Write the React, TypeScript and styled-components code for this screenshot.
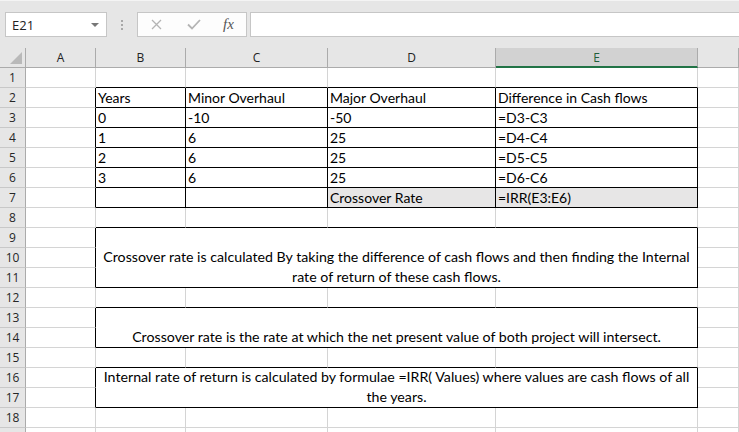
import React from 'react'
import styled, { createGlobalStyle } from 'styled-components'

const GlobalStyle = createGlobalStyle`
  body {
    margin: 0;
    font-family: 'Lato', 'Liberation Sans', sans-serif;
    background: #ffffff;
  }
`

const COLUMNS = ['A', 'B', 'C', 'D', 'E', 'F']
const ROW_COUNT = 19
const GRID_LINE = '#d4d4d4'
const BLACK = '#000000'

const table: Record<number, string[]> = {
  2: ['Years', 'Minor Overhaul', 'Major Overhaul', 'Difference in Cash flows'],
  3: ['0', '-10', '-50', '=D3-C3'],
  4: ['1', '6', '25', '=D4-C4'],
  5: ['2', '6', '25', '=D5-C5'],
  6: ['3', '6', '25', '=D6-C6'],
  7: ['', '', 'Crossover Rate', '=IRR(E3:E6)'],
}

const boxes = [
  {
    top: 9,
    bottom: 11,
    lines: [
      'Crossover rate is calculated By taking the difference of cash flows and then finding the Internal',
      'rate of return of these cash flows.',
    ],
  },
  {
    top: 13,
    bottom: 14,
    lines: ['Crossover rate is the rate at which the net present value of both project will intersect.'],
  },
  {
    top: 16,
    bottom: 17,
    lines: [
      'Internal rate of return is calculated by formulae =IRR( Values) where values are cash flows of all',
      'the years.',
    ],
  },
]

const Page = styled.div`
  width: 739px;
  height: 432px;
  overflow: hidden;
  background: #e6e6e6;
  border-top: 1px solid #f4f4f4;
  box-sizing: border-box;
`

const FormulaBar = styled.div`
  display: flex;
  align-items: center;
  height: 25px;
  margin-top: 11px;
  padding-left: 5px;
  margin-bottom: 11px;
`

const NameBox = styled.div`
  display: flex;
  align-items: center;
  justify-content: space-between;
  width: 102px;
  height: 25px;
  box-sizing: border-box;
  background: #ffffff;
  border: 1px solid #c6c6c6;
  padding: 0 7px 0 6px;
  font-family: 'Open Sans', 'Liberation Sans', sans-serif;
  font-size: 13px;
  color: #222222;
`

const DropArrow = styled.span`
  width: 0;
  height: 0;
  border-left: 4px solid transparent;
  border-right: 4px solid transparent;
  border-top: 4px solid #777777;
`

const Grip = styled.div`
  display: flex;
  flex-direction: column;
  gap: 2px;
  margin: 0 14px 0 14px;
  span {
    width: 2px;
    height: 2px;
    background: #a8a8a8;
  }
`

const FxBox = styled.div`
  display: flex;
  align-items: center;
  width: 110px;
  height: 25px;
  box-sizing: border-box;
  background: #fdfdfd;
  border: 1px solid #c6c6c6;
  padding-left: 13px;
`

const IconSlot = styled.span<{ $gap: number }>`
  display: flex;
  margin-right: ${p => p.$gap}px;
`

const FxLabel = styled.span`
  font-family: 'Liberation Serif', serif;
  font-style: italic;
  font-size: 15px;
  color: #555555;
`

const FormulaInput = styled.div`
  flex: 1;
  height: 25px;
  margin-left: 3px;
  box-sizing: border-box;
  background: #ffffff;
  border: 1px solid #c6c6c6;
  border-right: none;
`

const Sheet = styled.div`
  display: grid;
  grid-template-columns: 26px 70px 90px 142px 168px 202px 1fr;
  grid-auto-rows: 20px;
  background: #ffffff;
`

const Corner = styled.div`
  position: relative;
  background: #e6e6e6;
  border-right: 1px solid #ababab;
  border-bottom: 1px solid #ababab;
  box-sizing: border-box;
  &::after {
    content: '';
    position: absolute;
    right: 3px;
    bottom: 3px;
    width: 0;
    height: 0;
    border-left: 12px solid transparent;
    border-bottom: 12px solid #b9b9b9;
  }
`

const ColHeader = styled.div<{ $active?: boolean }>`
  display: flex;
  align-items: center;
  justify-content: center;
  box-sizing: border-box;
  background: ${p => (p.$active ? '#d2d2d2' : '#e6e6e6')};
  border-right: 1px solid #ababab;
  border-bottom: ${p => (p.$active ? '2px solid #217346' : '1px solid #ababab')};
  padding-top: ${p => (p.$active ? '1px' : '0')};
  font-family: 'Open Sans', 'Liberation Sans', sans-serif;
  font-size: 12px;
  color: ${p => (p.$active ? '#1f5e3a' : '#222222')};
`

const RowHeader = styled.div`
  display: flex;
  align-items: center;
  justify-content: center;
  box-sizing: border-box;
  background: #e6e6e6;
  border-right: 1px solid #ababab;
  border-bottom: 1px solid #c8c8c8;
  font-family: 'Open Sans', 'Liberation Sans', sans-serif;
  font-size: 12px;
  color: #262626;
`

const Cell = styled.div<{ $right: string; $bottom: string; $fill?: string }>`
  box-sizing: border-box;
  border-right: 1px solid ${p => p.$right};
  border-bottom: 1px solid ${p => p.$bottom};
  background: ${p => p.$fill || '#ffffff'};
  padding: 0 2px;
  font-size: 14px;
  line-height: 19px;
  color: #000000;
  white-space: nowrap;
  overflow: hidden;
`

const MergedBox = styled.div<{ $rows: number }>`
  grid-column: span 4;
  grid-row: span ${p => p.$rows};
  display: flex;
  flex-direction: column;
  justify-content: flex-end;
  align-items: center;
  box-sizing: border-box;
  border-right: 1px solid ${BLACK};
  border-bottom: 1px solid ${BLACK};
  font-size: 14.2px;
  line-height: 20px;
  color: #000000;
  white-space: nowrap;
  span {
    display: block;
    height: 20px;
  }
`

const inTable = (r: number, c: number) => r >= 2 && r <= 7 && c >= 1 && c <= 4
const boxFor = (r: number, c: number) =>
  boxes.find(b => r >= b.top && r <= b.bottom && c >= 1 && c <= 4)
const isBlack = (r: number, c: number) => inTable(r, c) || !!boxFor(r, c)

const CrossIcon = () => (
  <svg width="11" height="11" viewBox="0 0 11 11">
    <path d="M1 1 L10 10 M10 1 L1 10" stroke="#b4b4b4" strokeWidth="1.3" fill="none" />
  </svg>
)

const CheckIcon = () => (
  <svg width="14" height="11" viewBox="0 0 14 11">
    <path d="M1 5.5 L5 9.5 L13 1" stroke="#b4b4b4" strokeWidth="1.8" fill="none" />
  </svg>
)

const App = () => {
  const cells: React.ReactNode[] = []

  cells.push(<Corner key="corner" />)
  COLUMNS.forEach(col => (
    cells.push(
      <ColHeader key={'h' + col} $active={col === 'E'}>
        {col === 'F' ? '' : col}
      </ColHeader>
    )
  ))

  for (let r = 1; r <= ROW_COUNT; r++) {
    cells.push(<RowHeader key={'r' + r}>{r < ROW_COUNT ? r : ''}</RowHeader>)
    for (let c = 0; c < COLUMNS.length; c++) {
      const box = boxFor(r, c)
      if (box) {
        if (r === box.top && c === 1) {
          cells.push(
            <MergedBox key={r + '-' + c} $rows={box.bottom - box.top + 1}>
              {box.lines.map(line => <span key={line}>{line}</span>)}
            </MergedBox>
          )
        }
        continue
      }
      const right = isBlack(r, c) || isBlack(r, c + 1) ? BLACK : GRID_LINE
      const bottom = isBlack(r, c) || isBlack(r + 1, c) ? BLACK : GRID_LINE
      const text = inTable(r, c) ? table[r][c - 1] : ''
      const fill = r === 7 && (c === 3 || c === 4) ? '#e7e6e6' : undefined
      cells.push(
        <Cell key={r + '-' + c} $right={right} $bottom={bottom} $fill={fill}>
          {text}
        </Cell>
      )
    }
  }

  return (
    <Page>
      <GlobalStyle />
      <FormulaBar>
        <NameBox>
          E21
          <DropArrow />
        </NameBox>
        <Grip>
          <span />
          <span />
          <span />
        </Grip>
        <FxBox>
          <IconSlot $gap={25}>
            <CrossIcon />
          </IconSlot>
          <IconSlot $gap={22}>
            <CheckIcon />
          </IconSlot>
          <FxLabel>fx</FxLabel>
        </FxBox>
        <FormulaInput />
      </FormulaBar>
      <Sheet>{cells}</Sheet>
    </Page>
  )
}

export default App
